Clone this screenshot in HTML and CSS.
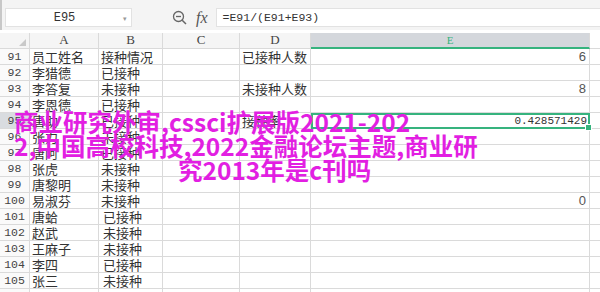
FILE: index.html
```html
<!DOCTYPE html>
<html>
<head>
  <title>接种情况统计</title>
  <link rel="stylesheet" href="styles.css">
</head>
<body>
  <div class="toolbar">
    <div class="name-box">
      <span class="name">E95</span>
      <span class="arrow">&#9662;</span>
    </div>
    <svg class="zoom-icon" width="16" height="16" viewBox="0 0 16 16">
      <circle cx="6.5" cy="6.5" r="5" fill="none" stroke="#666" stroke-width="1.3"/>
      <line x1="4" y1="6.5" x2="9" y2="6.5" stroke="#666" stroke-width="1.3"/>
      <line x1="10.2" y1="10.2" x2="14" y2="14" stroke="#666" stroke-width="1.5"/>
    </svg>
    <span class="fx">fx</span>
    <div class="formula">=E91/(E91+E93)</div>
  </div>

  <div class="sheet">
    <div class="corner"><span class="tri"></span></div>
    <div class="col-head">A</div>
    <div class="col-head">B</div>
    <div class="col-head">C</div>
    <div class="col-head">D</div>
    <div class="col-head active">E</div>
    <div class="col-head extra"></div>

    <div class="row-head">91</div><div class="cell">员工姓名</div><div class="cell">接种情况</div><div class="cell"></div><div class="cell">已接种人数</div><div class="cell num">6</div><div class="cell extra"></div>
    <div class="row-head">92</div><div class="cell">李猎德</div><div class="cell">已接种</div><div class="cell"></div><div class="cell"></div><div class="cell num"></div><div class="cell extra"></div>
    <div class="row-head">93</div><div class="cell">李答复</div><div class="cell">未接种</div><div class="cell"></div><div class="cell">未接种人数</div><div class="cell num">8</div><div class="cell extra"></div>
    <div class="row-head">94</div><div class="cell">李恩德</div><div class="cell">已接种</div><div class="cell"></div><div class="cell"></div><div class="cell num"></div><div class="cell extra"></div>
    <div class="row-head active">95</div><div class="cell">唐助</div><div class="cell">已接种</div><div class="cell"></div><div class="cell">接种率</div><div class="cell num selected">0.428571429<span class="handle"></span></div><div class="cell extra"></div>
    <div class="row-head">96</div><div class="cell">张力</div><div class="cell">未接种</div><div class="cell"></div><div class="cell"></div><div class="cell num"></div><div class="cell extra"></div>
    <div class="row-head">97</div><div class="cell">唐阿</div><div class="cell">已接种</div><div class="cell"></div><div class="cell"></div><div class="cell num"></div><div class="cell extra"></div>
    <div class="row-head">98</div><div class="cell">张虎</div><div class="cell">未接种</div><div class="cell"></div><div class="cell"></div><div class="cell num"></div><div class="cell extra"></div>
    <div class="row-head">99</div><div class="cell">唐黎明</div><div class="cell">未接种</div><div class="cell"></div><div class="cell"></div><div class="cell num"></div><div class="cell extra"></div>
    <div class="row-head">100</div><div class="cell">易淑芬</div><div class="cell">未接种</div><div class="cell"></div><div class="cell"></div><div class="cell num">0</div><div class="cell extra"></div>
    <div class="row-head">101</div><div class="cell">唐蛤</div><div class="cell indent">已接种</div><div class="cell"></div><div class="cell"></div><div class="cell num"></div><div class="cell extra"></div>
    <div class="row-head">102</div><div class="cell">赵武</div><div class="cell indent">未接种</div><div class="cell"></div><div class="cell"></div><div class="cell num"></div><div class="cell extra"></div>
    <div class="row-head">103</div><div class="cell">王麻子</div><div class="cell indent">未接种</div><div class="cell"></div><div class="cell"></div><div class="cell num"></div><div class="cell extra"></div>
    <div class="row-head">104</div><div class="cell">李四</div><div class="cell indent">已接种</div><div class="cell"></div><div class="cell"></div><div class="cell num"></div><div class="cell extra"></div>
    <div class="row-head">105</div><div class="cell">张三</div><div class="cell indent">未接种</div><div class="cell"></div><div class="cell"></div><div class="cell num"></div><div class="cell extra"></div>
    <div class="row-head"></div><div class="cell"></div><div class="cell"></div><div class="cell"></div><div class="cell"></div><div class="cell num"></div><div class="cell extra"></div>
  </div>

  <!-- caption laid over the sheet -->
  <div class="caption">
    <div>商业研究外审,cssci扩展版2021-202</div>
    <div>2,中国高校科技,2022金融论坛主题,商业研</div>
    <div class="last">究2013年是c刊吗</div>
  </div>
</body>
</html>
```

FILE: styles.css
```css
body {
  margin: 0;
  padding: 0;
  background-color: #fff;
  font-family: "Noto Sans CJK SC", sans-serif;
  color: #333;
  overflow: hidden;
  width: 600px;
  height: 292px;
  position: relative;
}

.toolbar {
  height: 30px;
  display: flex;
  align-items: center;
  background-color: #f4f4f4;
  border-left: 2px solid #c8c8c8;
  box-sizing: border-box;
  padding-top: 5px;
}

.name-box {
  width: 127px;
  height: 19px;
  margin-left: 3px;
  background-color: #fff;
  border: 1px solid #e2e2e2;
  box-sizing: border-box;
  display: flex;
  align-items: center;
}

.name {
  flex: 1;
  text-align: center;
  font-family: "Liberation Mono", monospace;
  font-size: 12px;
  color: #333;
}

.arrow {
  font-size: 7px;
  color: #999;
  margin-right: 4px;
}

.zoom-icon {
  margin-left: 40px;
}

.fx {
  margin-left: 8px;
  font-family: "Liberation Serif", serif;
  font-style: italic;
  font-size: 16px;
  color: #555;
}

.formula {
  flex: 1;
  height: 19px;
  margin-left: 8px;
  background-color: #fff;
  border: 1px solid #e2e2e2;
  border-right: none;
  box-sizing: border-box;
  padding-left: 6px;
  font-family: "Liberation Mono", monospace;
  font-size: 11.5px;
  line-height: 18px;
  color: #333;
}

.sheet {
  margin-top: 3px;
  display: grid;
  grid-template-columns: 30px 69px 64px 77px 71px 279px 10px;
  grid-auto-rows: 16px;
}

.sheet > div {
  box-sizing: border-box;
  border-right: 1px solid #dadada;
  border-bottom: 1px solid #dadada;
  white-space: nowrap;
}

.corner {
  background-color: #f5f5f5;
  position: relative;
}

.tri {
  position: absolute;
  right: 3px;
  bottom: 2px;
  width: 0;
  height: 0;
  border-left: 7px solid transparent;
  border-bottom: 7px solid #c9c9c9;
}

.col-head {
  background-color: #f5f5f5;
  text-align: center;
  font-family: "Liberation Serif", serif;
  font-size: 13px;
  line-height: 14px;
  color: #444;
}

.col-head.active {
  background-color: #d4d7dc;
  border-bottom: 2px solid #36b37e !important;
  color: #36b37e;
  font-size: 11px;
}

.col-head.extra,
.cell.extra {
  border-right: none !important;
  background-color: #fff;
}

.row-head {
  background-color: #fafafa;
  text-align: center;
  font-family: "Liberation Mono", monospace;
  font-size: 11.5px;
  line-height: 15px;
  color: #444;
}

.row-head.active {
  background-color: #d9dce0;
}

.cell {
  padding-left: 2px;
  font-size: 13px;
  line-height: 15px;
  color: #333;
}

.cell.indent {
  padding-left: 4px;
}

.cell.num {
  text-align: right;
  padding-right: 3px;
  font-family: "Liberation Sans", sans-serif;
  font-size: 13px;
  color: #555;
}

.cell.selected {
  position: relative;
  border: 2px solid #36b37e !important;
  font-family: "Liberation Mono", monospace;
  font-size: 11px;
  line-height: 12px;
  color: #333;
  padding-right: 1px;
}

.handle {
  position: absolute;
  right: -4px;
  bottom: -4px;
  width: 5px;
  height: 5px;
  background-color: #36b37e;
  border: 1px solid #fff;
}

.caption {
  position: absolute;
  left: 14px;
  top: 110px;
  font-family: "Noto Sans CJK SC", sans-serif;
  font-weight: bold;
  font-size: 24.5px;
  line-height: 24px;
  color: #e21fe2;
  white-space: nowrap;
}

.caption .last {
  padding-left: 164px;
}
```
